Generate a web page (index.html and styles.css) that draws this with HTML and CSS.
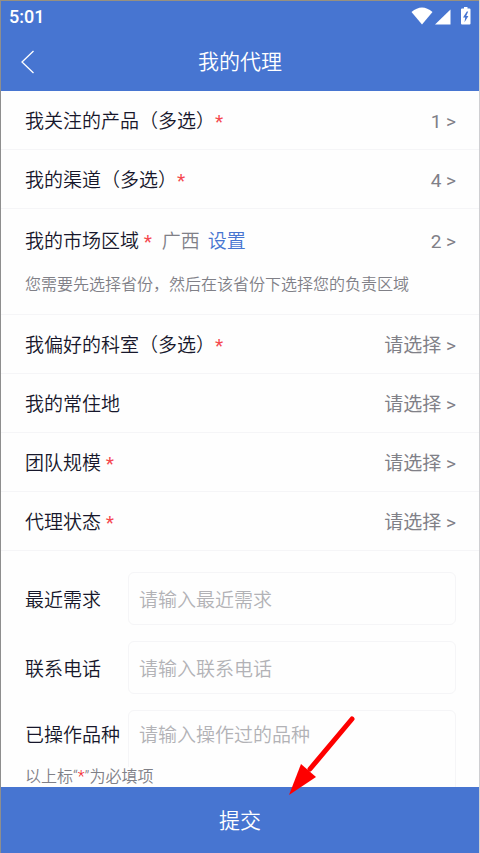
FILE: index.html
```html
<!DOCTYPE html>
<html lang="zh-CN">
<head>
<meta charset="utf-8">
<meta name="viewport" content="width=device-width, initial-scale=1">
<title>我的代理</title>
<link rel="stylesheet" href="styles.css">
</head>
<body>
<div class="app">
  <header class="header">
    <div class="status">
      <span class="time">5:01</span>
      <svg class="status-icons" width="60" height="20" viewBox="0 0 60 20" fill="#fff" aria-hidden="true">
        <path d="M0.5 5Q11 -4.2 21.500 5L11 17.500Z"/>
        <path d="M24 17.500L39.500 2.500V17.500Z"/>
        <path fill-rule="evenodd" d="M53 0h3.500v1.500H58.500q1 0 1 1V16.500q0 1-1 1H51q-1 0-1-1V2.500q0-1 1-1H53ZM55.800 4.500L52 10.500H54.200L53.500 15.300L57.400 9H55.200L57.200 4.500Z"/>
      </svg>
    </div>
    <div class="titlebar">
      <button class="back" type="button" aria-label="返回">
        <svg width="14" height="24" viewBox="0 0 14 24" fill="none" stroke="#fff" stroke-width="1.300"><path d="M12.500 1L1 12L12.500 23"/></svg>
      </button>
      <h1 class="title">我的代理</h1>
    </div>
  </header>

  <main class="content">
    <div class="row">
      <span class="label" id="l1">我关注的产品（多选）<span class="star">*</span></span>
      <button class="value" type="button" aria-labelledby="l1">1 &gt;</button>
    </div>
    <div class="row">
      <span class="label" id="l2">我的渠道（多选）<span class="star">*</span></span>
      <button class="value" type="button" aria-labelledby="l2">4 &gt;</button>
    </div>
    <div class="region">
      <div class="region-line">
        <span class="label" id="l3">我的市场区域 <span class="star">*</span></span>
        <span class="province">广西</span>
        <a class="set" href="#">设置</a>
        <button class="value" type="button" aria-labelledby="l3">2 &gt;</button>
      </div>
      <p class="hint">您需要先选择省份，然后在该省份下选择您的负责区域</p>
    </div>
    <div class="row">
      <span class="label" id="l4">我偏好的科室（多选）<span class="star">*</span></span>
      <button class="value" type="button" aria-labelledby="l4">请选择 &gt;</button>
    </div>
    <div class="row">
      <span class="label" id="l5">我的常住地</span>
      <button class="value" type="button" aria-labelledby="l5">请选择 &gt;</button>
    </div>
    <div class="row">
      <span class="label" id="l6">团队规模 <span class="star">*</span></span>
      <button class="value" type="button" aria-labelledby="l6">请选择 &gt;</button>
    </div>
    <div class="row">
      <span class="label" id="l7">代理状态 <span class="star">*</span></span>
      <button class="value" type="button" aria-labelledby="l7">请选择 &gt;</button>
    </div>

    <form class="fields" id="agent-form">
      <div class="field">
        <label class="label" for="need">最近需求</label>
        <input class="box" id="need" type="text" placeholder="请输入最近需求">
      </div>
      <div class="field">
        <label class="label" for="phone">联系电话</label>
        <input class="box" id="phone" type="tel" placeholder="请输入联系电话">
      </div>
      <div class="field field-top">
        <label class="label" for="products">已操作品种</label>
        <textarea class="box area" id="products" placeholder="请输入操作过的品种"></textarea>
      </div>
    </form>
  </main>

  <footer class="footer">
    <p class="note">以上标“<span class="mark">*</span>”为必填项</p>
    <button class="submit" type="submit" form="agent-form">提交</button>
    <svg class="arrow" width="70" height="82" viewBox="0 0 70 82" aria-hidden="true">
      <path d="M64 6L22 56" stroke="#fe0000" stroke-width="5" stroke-linecap="round"/>
      <path d="M1 82L13 51L28 64Z" fill="#fe0000"/>
    </svg>
  </footer>
</div>
</body>
</html>
```
FILE: styles.css
```css
* {
  box-sizing: border-box;
}

body {
  margin: 0;
  background: #fefefe;
  color: #17172b;
  font-family: Roboto, "Noto Sans CJK SC", sans-serif;
  font-size: 19px;
  font-weight: 350;
  line-height: 28px;
}

button,
input,
textarea {
  margin: 0;
  font: inherit;
}

button {
  padding: 0;
  border: 0;
  background: none;
  cursor: pointer;
}

.app {
  display: flex;
  flex-direction: column;
  height: 100vh;
  border-left: 1px solid #8e8e8e;
  border-right: 1px solid #cfcfd2;
}

.header {
  flex: none;
  border-top: 1px solid #98907f;
  background: #4775d1;
  color: #fff;
}

.status {
  display: flex;
  align-items: center;
  justify-content: space-between;
  height: 32px;
  padding: 0 8px;
}

.time {
  font-size: 18px;
  font-weight: 500;
}

.titlebar {
  display: grid;
  grid-template-columns: 48px 1fr 48px;
  align-items: center;
  height: 58px;
}

.back {
  display: flex;
  padding-left: 20px;
}

.title {
  grid-column: 2;
  margin: 0;
  font-size: 21px;
  font-weight: 350;
  line-height: 30px;
  text-align: center;
}

.content {
  flex: 1;
  min-height: 0;
  overflow: hidden;
}

.row {
  display: flex;
  align-items: center;
  justify-content: space-between;
  height: 59px;
  padding: 4px 23px 0 24px;
  border-bottom: 1px solid #f5f5f7;
}

.label {
  white-space: nowrap;
}

.star {
  color: #f5494f;
  font-weight: 400;
}

.value {
  color: #808087;
  font-weight: 400;
}

.region {
  padding: 19px 23px 15px 24px;
  border-bottom: 1px solid #f5f5f7;
}

.region-line {
  display: flex;
  align-items: center;
  gap: 8px;
}

.region-line .value {
  margin-left: auto;
}

.province {
  margin-left: 2px;
  color: #808087;
}

.set {
  color: #4775d1;
  text-decoration: none;
}

.hint {
  margin: 15px 0 0;
  color: #808087;
  font-size: 16px;
}

.fields {
  display: grid;
  gap: 16px;
  padding: 21px 23px 20px 24px;
}

.field {
  display: grid;
  grid-template-columns: 95px 1fr;
  column-gap: 8px;
  align-items: center;
}

.field .label {
  padding-top: 4px;
}

.field-top {
  align-items: start;
}

.field-top .label {
  padding-top: 12px;
}

.box {
  width: 100%;
  height: 53px;
  padding: 3px 10px 0;
  border: 1px solid #f5f5f7;
  border-radius: 6px;
  outline: 0;
  background: transparent;
  color: #17172b;
}

.box::placeholder {
  color: #b2b2b6;
  opacity: 1;
}

.area {
  display: block;
  height: 104px;
  padding-top: 11px;
  resize: none;
}

.footer {
  position: relative;
  flex: none;
}

.note {
  position: absolute;
  bottom: 100%;
  left: 24px;
  margin: 0;
  background: #fefefe;
  color: #808087;
  font-size: 16px;
  line-height: 20px;
}

.mark {
  color: #f5262c;
}

.submit {
  display: block;
  width: 100%;
  height: 66px;
  padding-top: 2px;
  background: #4775d1;
  color: #fff;
  font-size: 21px;
}

.arrow {
  position: absolute;
  top: -74px;
  left: 60%;
}
```
